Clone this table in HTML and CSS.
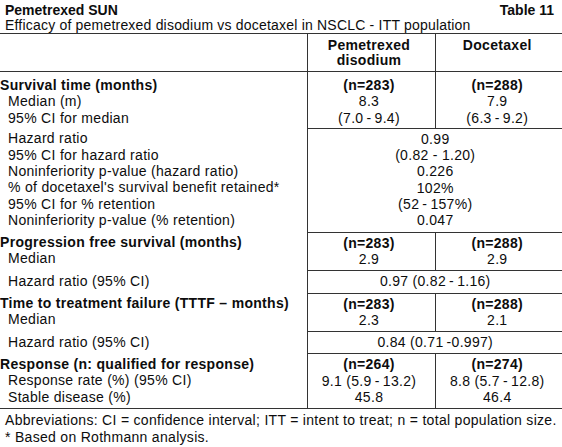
FILE: index.html
```html
<!DOCTYPE html>
<html lang="en">
<head>
    <meta charset="UTF-8">
    <meta name="viewport" content="width=device-width, initial-scale=1.0">
    <title>Pemetrexed SUN - Table 11</title>
    <link rel="stylesheet" href="styles.css">
</head>
<body>
    <div class="sheet">
        <div class="caption">
            <div class="caption-top">
                <span class="drug">Pemetrexed SUN</span>
                <span class="table-no">Table 11</span>
            </div>
            <div class="caption-sub">Efficacy of pemetrexed disodium vs docetaxel in NSCLC - ITT population</div>
        </div>

        <table class="efficacy">
            <colgroup>
                <col class="col-label">
                <col class="col-arm">
                <col class="col-arm">
            </colgroup>
            <thead>
                <tr>
                    <th class="label"></th>
                    <th class="arm">Pemetrexed<br>disodium</th>
                    <th class="arm">Docetaxel</th>
                </tr>
            </thead>
            <tbody>
                <tr class="first">
                    <td class="label">
                        <span class="group">Survival time (months)</span>
                        <span class="item">Median (m)</span>
                        <span class="item">95% CI for median</span>
                    </td>
                    <td class="arm"><strong>(n=283)</strong><br>8.3<br>(7.0&thinsp;-&thinsp;9.4)</td>
                    <td class="arm"><strong>(n=288)</strong><br>7.9<br>(6.3&thinsp;-&thinsp;9.2)</td>
                </tr>
                <tr>
                    <td class="label">
                        <span class="item">Hazard ratio</span>
                        <span class="item">95% CI for hazard ratio</span>
                        <span class="item">Noninferiority p-value (hazard ratio)</span>
                        <span class="item">% of docetaxel's survival benefit retained*</span>
                        <span class="item">95% CI for % retention</span>
                        <span class="item">Noninferiority p-value (% retention)</span>
                    </td>
                    <td class="both" colspan="2">0.99<br>(0.82 - 1.20)<br>0.226<br>102%<br>(52&thinsp;-&thinsp;157%)<br>0.047</td>
                </tr>
                <tr>
                    <td class="label">
                        <span class="group">Progression free survival (months)</span>
                        <span class="item">Median</span>
                    </td>
                    <td class="arm"><strong>(n=283)</strong><br>2.9</td>
                    <td class="arm"><strong>(n=288)</strong><br>2.9</td>
                </tr>
                <tr>
                    <td class="label">
                        <span class="item">Hazard ratio (95% CI)</span>
                    </td>
                    <td class="both" colspan="2">0.97 (0.82&thinsp;-&thinsp;1.16)</td>
                </tr>
                <tr>
                    <td class="label">
                        <span class="group">Time to treatment failure (TTTF &ndash; months)</span>
                        <span class="item">Median</span>
                    </td>
                    <td class="arm"><strong>(n=283)</strong><br>2.3</td>
                    <td class="arm"><strong>(n=288)</strong><br>2.1</td>
                </tr>
                <tr>
                    <td class="label">
                        <span class="item">Hazard ratio (95% CI)</span>
                    </td>
                    <td class="both" colspan="2">0.84 (0.71&thinsp;-0.997)</td>
                </tr>
                <tr class="last">
                    <td class="label">
                        <span class="group">Response (n: qualified for response)</span>
                        <span class="item">Response rate (%) (95% CI)</span>
                        <span class="item">Stable disease (%)</span>
                    </td>
                    <td class="arm"><strong>(n=264)</strong><br>9.1 (5.9&thinsp;-&thinsp;13.2)<br>45.8</td>
                    <td class="arm"><strong>(n=274)</strong><br>8.8 (5.7&thinsp;-&thinsp;12.8)<br>46.4</td>
                </tr>
            </tbody>
        </table>

        <div class="notes">
            <p>Abbreviations: CI = confidence interval; ITT = intent to treat; n = total population size.</p>
            <p>* Based on Rothmann analysis.</p>
        </div>
    </div>
</body>
</html>
```

FILE: styles.css
```css
:root {
    --text-color: #0d0d0d;
    --rule-color: #333333;
}

* {
    box-sizing: border-box;
    margin: 0;
    padding: 0;
}

body {
    font-family: 'Liberation Sans', Arial, sans-serif;
    font-size: 14px;
    letter-spacing: 0.3px;
    color: var(--text-color);
    background: #ffffff;
}

.sheet {
    width: 562px;
}

/* caption above the table */
.caption {
    padding: 3px 8px 0 5px;
    line-height: 15px;
}

.caption-top {
    display: flex;
    justify-content: space-between;
    font-weight: 700;
    letter-spacing: 0;
}

.caption-sub {
    letter-spacing: 0.2px;
}

/* table */
.efficacy {
    width: 100%;
    border-collapse: collapse;
    table-layout: fixed;
}

.col-label {
    width: 307px;
}

.col-arm {
    width: 128px;
}

.efficacy thead tr {
    border-top: 1px solid var(--rule-color);
    border-bottom: 1px solid var(--rule-color);
}

.efficacy th {
    vertical-align: top;
    font-weight: 700;
    line-height: 15px;
    padding: 4px 4px 3px 0;
}

.efficacy th.arm {
    border-left: 1px solid var(--rule-color);
    text-align: center;
}

.efficacy td {
    vertical-align: top;
    line-height: 16.3px;
    padding: 2px 0 3px;
}

.efficacy tr.first td {
    padding-top: 5px;
    padding-bottom: 2px;
}

.efficacy td.arm {
    border-left: 1px solid var(--rule-color);
    border-bottom: 1px solid var(--rule-color);
    text-align: center;
    padding-right: 4px;
}

.efficacy td.both {
    border-left: 1px solid var(--rule-color);
    border-bottom: 1px solid var(--rule-color);
    text-align: center;
}

.efficacy tr.last {
    border-bottom: 1px solid var(--rule-color);
}

.label {
    padding-left: 5px;
}

.label .group {
    display: block;
    font-weight: 700;
}

.label .item {
    display: block;
    padding-left: 8px;
}

/* footnotes */
.notes {
    padding: 3px 5px 0;
    line-height: 17px;
}
```
